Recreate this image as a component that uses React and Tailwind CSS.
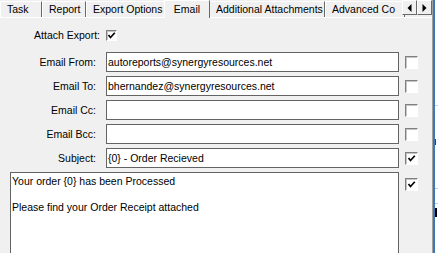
import React from 'react';

const tabs = [
  { label: 'Task', w: 'w-[42px]' },
  { label: 'Report', w: 'w-[44px]' },
  { label: 'Export Options', w: 'w-[79px]' },
  { label: 'Email', w: 'w-[46px]', active: true },
  { label: 'Additional Attachments', w: 'w-[116px]' },
  { label: 'Advanced Co', w: 'w-[80px]' },
];

const fields = [
  { label: 'Email From:', value: 'autoreports@synergyresources.net', checked: false },
  { label: 'Email To:', value: 'bhernandez@synergyresources.net', checked: false },
  { label: 'Email Cc:', value: '', checked: false },
  { label: 'Email Bcc:', value: '', checked: false },
  { label: 'Subject:', value: '{0} - Order Recieved', checked: true },
];

function Check({ checked, small }) {
  return (
    <div
      className={`${small ? 'w-[11px] h-[11px]' : 'w-[13px] h-[13px]'} shrink-0 border border-t-[#808080] border-l-[#808080] border-r-white border-b-white bg-white shadow-[inset_1px_1px_0_#c4c4c4] flex items-center justify-center`}
    >
      {checked && (
        <svg width="9" height="9" viewBox="0 0 9 9">
          <path d="M1.5 4 L3.5 6.5 L7.8 1.8" fill="none" stroke="#000" strokeWidth="1.7" />
        </svg>
      )}
    </div>
  );
}

function ArrowButton({ dir }) {
  return (
    <div className="w-[15px] h-[15px] bg-[#f0f0f0] border border-t-white border-l-white border-r-[#696969] border-b-[#696969] flex items-center justify-center">
      <svg width="5" height="8" viewBox="0 0 5 8">
        {dir === 'left' ? (
          <path d="M4.5 0 L0.5 4 L4.5 8 Z" fill="#000" />
        ) : (
          <path d="M0.5 0 L4.5 4 L0.5 8 Z" fill="#000" />
        )}
      </svg>
    </div>
  );
}

export default function App() {
  return (
    <div className="w-[438px] h-[253px] flex overflow-hidden bg-white text-black font-['Liberation_Sans',Arial,sans-serif] text-[10.5px] leading-[13px]">
      <div className="w-[432px] flex flex-col bg-[#f0f0f0]">
        {/* tab strip */}
        <div className="relative h-[18px] shrink-0 flex items-end overflow-hidden">
          <div className="absolute left-0 right-0 bottom-0 h-px bg-white" />
          {tabs.map((t) =>
            t.active ? (
              <div
                key={t.label}
                className={`relative z-10 ${t.w} h-[18px] shrink-0 -mx-px bg-[#f0f0f0] border-t border-l border-white border-r border-r-[#696969] flex items-start justify-center pt-[2px]`}
              >
                {t.label}
              </div>
            ) : (
              <div
                key={t.label}
                className={`${t.w} h-[16px] mb-px shrink-0 border-t border-l border-white border-r border-r-[#696969] flex items-start justify-start pl-[6px] pt-[1px] whitespace-nowrap`}
              >
                {t.label}
              </div>
            )
          )}
          <div className="absolute right-0 top-0 flex">
            <ArrowButton dir="left" />
            <ArrowButton dir="right" />
          </div>
        </div>

        {/* panel */}
        <div className="flex flex-col pt-[7px]">
          <div className="h-[20px] flex items-center">
            <div className="w-[100px] text-right">Attach Export:</div>
            <div className="ml-[6px]">
              <Check checked small />
            </div>
          </div>

          <div className="mt-[7px] flex flex-col gap-[4px]">
            {fields.map((f) => (
              <div key={f.label} className="h-[20px] flex items-center">
                <div className="w-[96px] text-right">{f.label}</div>
                <div className="ml-[10px] w-[293px] h-[20px] bg-white border border-[#646464] pl-[1px] flex items-center whitespace-nowrap overflow-hidden">
                  {f.value}
                </div>
                <div className="ml-[6px]">
                  <Check checked={f.checked} />
                </div>
              </div>
            ))}
          </div>

          <div className="mt-[4px] flex items-start">
            <div className="ml-[10px] w-[389px] h-[90px] bg-white border border-[#646464] pl-[1px] pt-[2px]">
              <div>Your order {'{0}'} has been Processed</div>
              <div className="h-[13px]" />
              <div>Please find your Order Receipt attached</div>
            </div>
            <div className="ml-[6px] mt-[6px]">
              <Check checked />
            </div>
          </div>
        </div>
      </div>

      <div className="w-px bg-[#a0a0a0]" />
      <div className="w-[2px] bg-[#3b78b4]" />
      <div className="relative flex-1 bg-white">
        <div className="absolute left-0 top-[105px] w-full h-px bg-[#d0d0d0]" />
        <div className="absolute left-0 top-[139px] w-px h-[6px] bg-[#404040]" />
        <div className="absolute left-0 top-[188px] w-full h-px bg-[#c8c8c8]" />
        <div className="absolute left-0 top-[203px] w-full h-px bg-[#c8c8c8]" />
        <div className="absolute left-0 top-[208px] w-[2px] h-[9px] bg-black" />
      </div>
    </div>
  );
}
